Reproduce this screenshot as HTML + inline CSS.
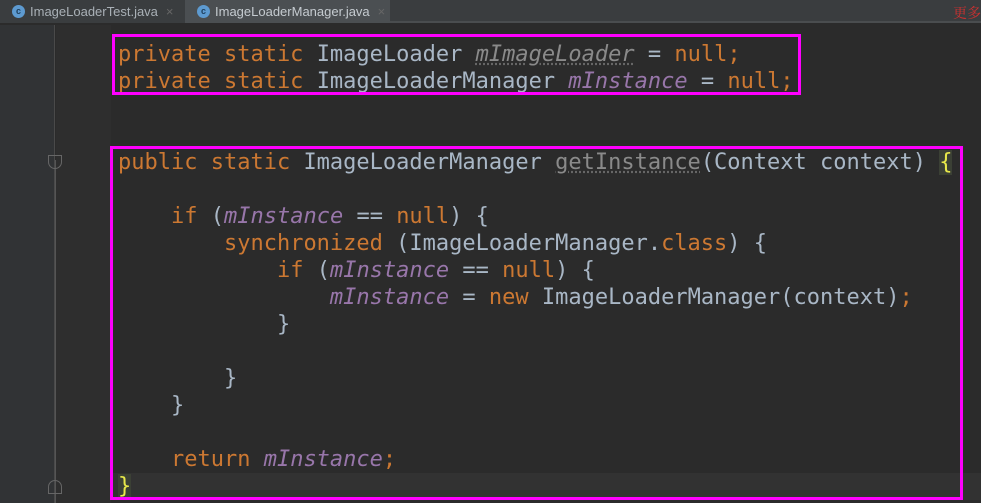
<!DOCTYPE html>
<html><head><meta charset="utf-8"><style>
*{margin:0;padding:0;box-sizing:border-box}
body{width:981px;height:503px;overflow:hidden;background:#2b2b2b;position:relative;font-family:"Liberation Mono",monospace}
.tabs{position:absolute;left:0;top:0;width:981px;height:23px;background:#3a3d3f;border-bottom:2px solid #4a4d4f}
.tab{position:absolute;top:0;height:23px;font:13px "Liberation Sans",sans-serif;color:#a9b0b6;line-height:23px;padding-left:30px}
.tab .ic{position:absolute;left:12px;top:5px;width:13px;height:13px;border-radius:50%;background:#5d9ad0;color:#1d3e5c;font-size:9px;line-height:13px;text-align:center;font-weight:bold}
.tab .x{color:#666;margin-left:8px}
.gut{position:absolute;left:0;top:25px;width:55px;height:478px;background:#313335;border-right:1px solid #4a4a4a}
.gut2{position:absolute;left:56px;top:25px;width:55px;height:478px;background:#2e2e2e}
.code{position:absolute;left:118px;top:41px;font-family:"DejaVu Sans Mono","Liberation Mono",monospace;font-size:22px;line-height:27px;color:#a9b7c6;white-space:pre}
.k{color:#cc7832}.v{color:#9876aa;font-style:italic}.g{color:#8a8a8a;text-decoration:underline dotted #666}
.box{position:absolute;border:3px solid #ff00ff}
.cur{position:absolute;left:111px;top:473px;width:870px;height:27px;background:#323232}
.fold{position:absolute;left:48px;width:14px;height:14px;border:1px solid #666}
</style></head><body>
<div class="tabs">
<div class="tab" style="left:0;width:185px;background:#3a3d3f"><span class="ic">c</span>ImageLoaderTest.java<span class="x">×</span></div>
<div class="tab" style="left:185px;width:205px;background:#4b4f52;color:#c5cbd0"><span class="ic">c</span>ImageLoaderManager.java<span class="x">×</span></div>
<div style="position:absolute;right:0;top:3px;color:#d03030;font:14px 'Noto Serif CJK SC',serif">更多</div>
</div>
<div class="gut"></div><div class="gut2"></div>
<div style="position:absolute;left:55px;top:160px;width:1px;height:343px;background:#555"></div>
<div class="cur"></div>
<div class="fold" style="top:155px;border-radius:0 0 7px 7px"></div>
<div class="fold" style="top:480px;border-radius:7px 7px 0 0"></div>
<div class="code"><span class="k">private static </span>ImageLoader <span class="g v">mImageLoader</span> = <span class="k">null;</span>
<span class="k">private static </span>ImageLoaderManager <span class="v">mInstance</span> = <span class="k">null;</span>


<span class="k">public static </span>ImageLoaderManager <span class="g">getInstance</span>(Context context) <span style="color:#e8e84a;background:#3b4035">{</span>

    <span class="k">if </span>(<span class="v">mInstance</span> == <span class="k">null</span>) {
        <span class="k">synchronized </span>(ImageLoaderManager.<span class="k">class</span>) {
            <span class="k">if </span>(<span class="v">mInstance</span> == <span class="k">null</span>) {
                <span class="v">mInstance</span> = <span class="k">new </span>ImageLoaderManager(context)<span class="k">;</span>
            }

        }
    }

    <span class="k">return </span><span class="v">mInstance</span><span class="k">;</span>
<span style="color:#e8e84a;background:#3b4035">}</span></div>
<div class="box" style="left:112px;top:34px;width:689px;height:61px"></div>
<div class="box" style="left:110px;top:146px;width:853px;height:354px"></div>
</body></html>
